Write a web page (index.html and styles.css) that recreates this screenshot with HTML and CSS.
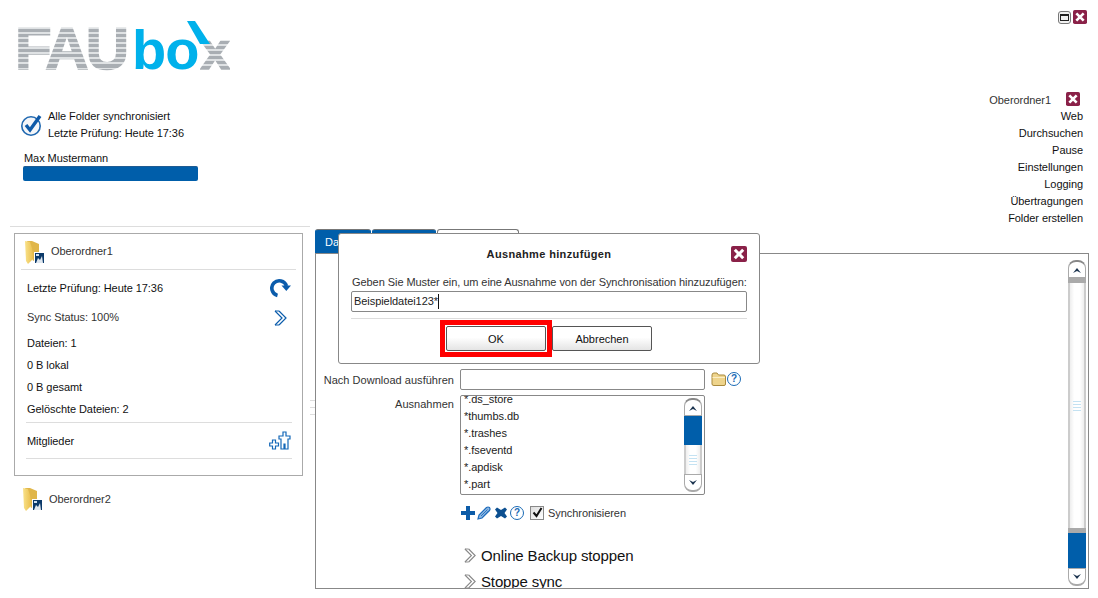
FILE: index.html
```html
<!DOCTYPE html>
<html lang="de">
<head>
<meta charset="utf-8">
<title>FAUbox</title>
<link rel="stylesheet" href="styles.css">
</head>
<body>
<svg class="defs" width="0" height="0" aria-hidden="true">
  <defs>
    <linearGradient id="flap" x1="0" y1="0" x2="1" y2="0">
      <stop offset="0" stop-color="#f9e28a"/><stop offset="1" stop-color="#eabf4e"/>
    </linearGradient>
  </defs>
  <symbol id="folder" viewBox="0 0 24 24">
    <path d="M6 1 L11 1 L18 4 V18 L12 21 Z" fill="#e0b64a"/>
    <path d="M4 1 L9 2 Q12 9 12 16 L12 19 L7 24 L5 21 Z" fill="url(#flap)"/>
    <rect x="13" y="12" width="10" height="11" fill="#fff"/>
    <rect x="14" y="13" width="9" height="10" fill="#0c3a6a"/>
    <path d="M15 23 L17 18 L19 20 L21 16 L22 23 Z" fill="#dfe7ef"/>
    <rect x="15" y="14" width="3" height="2" fill="#cfe0f0"/>
  </symbol>
  <symbol id="cross" viewBox="0 0 16 16">
    <rect x="0" y="0" width="16" height="16" rx="2" fill="#8a2148"/>
    <path d="M3.8 3.8 L12.2 12.2 M12.2 3.8 L3.8 12.2" stroke="#fff" stroke-width="3" fill="none"/>
  </symbol>
  <symbol id="chev" viewBox="0 0 14 16">
    <path d="M1 1 H5 M1 15 H5" fill="none" stroke="currentColor" stroke-width="1"/>
    <path d="M5 1 L12 8 L5 15 M1 1 L8 8 L1 15" fill="none" stroke="currentColor" stroke-width="1.2"/>
  </symbol>
</svg>

<div class="app">
  <header class="top">
    <div class="top-left">
      <div class="logo">
        <span class="logo-fau">FAU</span><span class="logo-bo">bo</span><span class="logo-x">x</span>
        <svg class="logo-accent" width="24" height="23" viewBox="0 0 24 23"><path d="M0 0 H8 L23 23 H13 Z" fill="#00b1eb"/></svg>
      </div>
      <div class="status">
        <svg class="status-icon" width="22" height="24" viewBox="0 0 22 24">
          <circle cx="11" cy="13" r="9.2" fill="#f4f6f9" stroke="#2068b0" stroke-width="1.6"/>
          <path d="M6 12 L10 17 L20 3" fill="none" stroke="#0f5aa8" stroke-width="3.4"/>
        </svg>
        <div class="status-text">
          <div>Alle Folder synchronisiert</div>
          <div>Letzte Prüfung: Heute 17:36</div>
        </div>
      </div>
      <div class="user">Max Mustermann</div>
      <div class="quota"></div>
    </div>
    <div class="top-right">
      <div class="win-btns">
        <span class="win-max"><span class="win-max-in"></span></span>
        <svg class="ico14" viewBox="0 0 16 16"><use href="#cross"/></svg>
      </div>
      <nav class="menu">
        <div class="menu-folder"><span class="menu-folder-name">Oberordner1</span><svg class="ico15" viewBox="0 0 16 16"><use href="#cross"/></svg></div>
        <div>Web</div>
        <div>Durchsuchen</div>
        <div>Pause</div>
        <div>Einstellungen</div>
        <div>Logging</div>
        <div>Übertragungen</div>
        <div>Folder erstellen</div>
      </nav>
    </div>
  </header>

  <main class="main">
    <aside class="side">
      <section class="card">
        <div class="folder-row">
          <svg class="folder-ico" viewBox="0 0 24 24"><use href="#folder"/></svg>
          <span>Oberordner1</span>
        </div>
        <div class="info">
          <div class="info-row r-check"><span>Letzte Prüfung: Heute 17:36</span>
            <svg class="ico-refresh" width="22" height="20" viewBox="0 0 22 20">
              <path d="M7.5 17.5 A7.5 7.5 0 1 1 16.5 8" fill="none" stroke="#0b5cab" stroke-width="3.6"/>
              <path d="M11.5 7.5 H21 L16.3 13 Z" fill="#0b5cab"/>
            </svg>
          </div>
          <div class="info-row r-sync"><span>Sync Status: 100%</span>
            <svg class="ico-chev" viewBox="0 0 14 16"><use href="#chev"/></svg>
          </div>
          <div class="info-row r-plain">Dateien: 1</div>
          <div class="info-row r-plain">0 B lokal</div>
          <div class="info-row r-plain">0 B gesamt</div>
          <div class="info-row r-plain">Gelöschte Dateien: 2</div>
          <div class="info-row r-members"><span class="members-name">Mitglieder</span>
            <svg class="ico-member" width="22" height="20" viewBox="0 0 22 20">
              <path d="M14 1 H17 V5 H21 V8 H19 V18 H16 V13 H15 V18 H12 V8 H10 V5 H14 Z" fill="#fff" stroke="#1468b8" stroke-width="1.2"/>
              <path d="M3.5 9 H6.5 V12 H9.5 V15 H6.5 V18 H3.5 V15 H.7 V12 H3.5 Z" fill="#fff" stroke="#1468b8" stroke-width="1.2"/>
            </svg>
          </div>
        </div>
      </section>
      <div class="folder-row2">
        <svg class="folder-ico" viewBox="0 0 24 24"><use href="#folder"/></svg>
        <span>Oberordner2</span>
      </div>
    </aside>

    <div class="grip"><i></i><i></i><i></i></div>

    <section class="pane">
      <div class="tabs">
        <div class="tab tab-on t1">Daten</div>
        <div class="tab tab-on t2"></div>
        <div class="tab t3"></div>
      </div>
      <div class="panel">
        <div class="form">
          <div class="form-row">
            <label class="lbl">Nach Download ausführen</label>
            <div class="field"></div>
            <svg class="ico-folder2" width="15" height="14" viewBox="0 0 15 14">
              <path d="M1 3 Q1 1 3 1 H6 L7.5 3 H13 Q14.5 3 14.5 5 V12 Q14.5 13.5 13 13.5 H3 Q1 13.5 1 12 Z" fill="#eed48c" stroke="#a98a3e" stroke-width="1"/>
              <path d="M1.5 5.5 H14" stroke="#fbeec6" stroke-width="1"/>
            </svg>
            <span class="help">?</span>
          </div>
          <div class="form-row list-row">
            <label class="lbl">Ausnahmen</label>
            <div class="list">
              <div class="list-items">
                <div>*.ds_store</div>
                <div>*thumbs.db</div>
                <div>*.trashes</div>
                <div>*.fseventd</div>
                <div>*.apdisk</div>
                <div>*.part</div>
              </div>
              <div class="sb sb-list">
                <div class="sb-btn sb-up"><svg width="10" height="6" viewBox="0 0 10 6"><path d="M1 6 L5 1 L9 6 L5 4 Z" fill="#1c3550"/></svg></div>
                <div class="sb-blue sb-list-thumb"></div>
                <div class="sb-track"><div class="sb-lines"><i></i><i></i><i></i><i></i></div></div>
                <div class="sb-btn sb-down"><svg width="10" height="6" viewBox="0 0 10 6"><path d="M1 0 L5 2 L9 0 L5 5 Z" fill="#1c3550"/></svg></div>
              </div>
            </div>
          </div>
          <div class="tools">
            <svg width="14" height="14" viewBox="0 0 14 14"><path d="M5 0 H9 V5 H14 V9 H9 V14 H5 V9 H0 V5 H5 Z" fill="#0d5ca8"/></svg>
            <svg class="t-pencil" width="14" height="14" viewBox="0 0 14 14">
              <path d="M1 13 L2 9 L9.5 1.5 Q11 .5 12.5 1.5 Q13.5 3 12.5 4.5 L5 12 Z" fill="#8fb8e2" stroke="#1f6cbc" stroke-width="1.2"/>
              <path d="M4 10 L10.5 3.5 M6 11 L11.5 5" stroke="#1f6cbc" stroke-width=".9"/>
            </svg>
            <svg class="t-x" width="12" height="12" viewBox="0 0 12 12"><path d="M2 0.5 L6 3 L10 0.5 L12 2.5 L9.5 6 L12 9.5 L10 11.5 L6 9 L2 11.5 L0 9.5 L2.5 6 L0 2.5 Z" fill="#0c4f90"/></svg>
            <span class="help t-help">?</span>
            <span class="check"><svg width="11" height="11" viewBox="0 0 11 11"><path d="M1.5 5.5 L4.5 9 L9.5 1" fill="none" stroke="#111" stroke-width="2"/></svg></span>
            <span class="check-lbl">Synchronisieren</span>
          </div>
          <div class="action a1"><svg class="act-chev" viewBox="0 0 14 16"><use href="#chev"/></svg><span>Online Backup stoppen</span></div>
          <div class="action a2"><svg class="act-chev" viewBox="0 0 14 16"><use href="#chev"/></svg><span>Stoppe sync</span></div>
        </div>
        <div class="sb sb-main">
          <div class="sb-btn sb-up"><svg width="10" height="6" viewBox="0 0 10 6"><path d="M1 6 L5 1 L9 6 L5 4 Z" fill="#1c3550"/></svg></div>
          <div class="sb-cap"></div>
          <div class="sb-track"><div class="sb-lines"><i></i><i></i><i></i><i></i></div></div>
          <div class="sb-cap"></div>
          <div class="sb-blue sb-main-thumb"></div>
          <div class="sb-btn sb-down"><svg width="10" height="6" viewBox="0 0 10 6"><path d="M1 0 L5 2 L9 0 L5 5 Z" fill="#1c3550"/></svg></div>
        </div>
      </div>
    </section>
  </main>

  <div class="dialog">
    <div class="dlg-head">
      <span class="dlg-title">Ausnahme hinzufügen</span>
      <svg class="dlg-close" viewBox="0 0 16 16"><use href="#cross"/></svg>
    </div>
    <div class="dlg-prompt">Geben Sie Muster ein, um eine Ausnahme von der Synchronisation hinzuzufügen:</div>
    <div class="dlg-input"><span>Beispieldatei123*</span><span class="caret"></span></div>
    <div class="dlg-sep"></div>
    <div class="dlg-btns">
      <button class="btn btn-ok">OK</button>
      <button class="btn">Abbrechen</button>
    </div>
  </div>
</div>
</body>
</html>
```
FILE: styles.css
```css
* { box-sizing: border-box; }
html, body { margin: 0; padding: 0; background: #fff; }
body {
  width: 1098px; height: 598px; overflow: hidden;
  font: 11px/17px "Liberation Sans", Arial, sans-serif;
  letter-spacing: -0.06px;
  color: #111;
}
.defs { position: absolute; }
.app { position: relative; width: 1098px; height: 598px; overflow: hidden; }

/* header */
.top { display: flex; justify-content: space-between; height: 226px; }
.top-left { padding: 21px 0 0 18px; width: 320px; }
.logo { position: relative; display: flex; align-items: baseline; height: 50px; width: 215px; padding-top: 3px; font-weight: 700; letter-spacing: 0; }
.logo-fau, .logo-bo, .logo-x { height: 50px; line-height: 50px; }
.logo-fau, .logo-x {
  background: repeating-linear-gradient(#a9aeb3 0 3.5px, #dfe2e4 3.5px 5px);
  -webkit-background-clip: text; background-clip: text; color: transparent;
  -webkit-text-stroke: 1.6px transparent;
}
.logo-fau { font-size: 60px; letter-spacing: -3px; width: 117px; margin-left: -3px; flex: none; }
.logo-bo { font-size: 56px; color: #00b1eb; letter-spacing: -1px; }
.logo-x { font-size: 53px; margin-left: 2px; }
.logo-accent { position: absolute; left: 169px; top: 0; }

.status { display: flex; align-items: center; margin: 37px 0 0 2px; gap: 6px; }
.status-icon { flex: none; margin-top: -1px; }
.user { margin: 8px 0 0 6px; }
.quota { width: 175px; height: 15px; margin: -1px 0 0 5px; background: #005eaa; border-radius: 2px; border-top: 1px solid #1f5b92; }

.top-right { width: 130px; padding: 10px 11px 0 0; display: flex; flex-direction: column; align-items: flex-end; }
.win-btns { display: flex; align-items: center; gap: 2px; height: 14px; }
.win-max { width: 13px; height: 13px; border: 1px solid #777; border-radius: 3px; background: #f2f2f2; display: flex; align-items: center; justify-content: center; }
.win-max-in { width: 9px; height: 7px; border: 1px solid #222; border-top-width: 2px; }
.ico14 { width: 14px; height: 14px; display: block; }
.menu { margin: 67px 4px 0 0; text-align: right; white-space: nowrap; }
.menu-folder { display: flex; justify-content: flex-end; align-items: flex-start; position: relative; height: 17px; padding-right: 32px; color: #333; }
.menu-folder-name { line-height: 19px; }
.ico15 { position: absolute; right: 3px; top: 1px; width: 14px; height: 14px; }

/* main */
.main { display: flex; height: 372px; }
.side { width: 300px; margin-left: 10px; border-top: 1px solid #ddd; padding: 6px 0 0 4px; flex: none; }
.card { width: 289px; height: 243px; border: 1px solid #aaa; padding: 0 6px; }
.folder-row { display: flex; align-items: center; height: 36px; border-bottom: 1px solid #ddd; gap: 6px; color: #333; }
.folder-ico { width: 24px; height: 24px; flex: none; }
.info { padding: 0 4px 0 5px; }
.info-row { display: flex; justify-content: space-between; align-items: center; height: 22px; padding-left: 1px; }
.r-check { height: 36px; }
.r-sync { height: 23px; color: #333; }
.r-plain:nth-child(3) { margin-top: 3px; }
.ico-refresh { margin-top: -1px; }
.ico-chev { width: 14px; height: 16px; color: #0b5cab; margin-right: 4px; }
.r-members { height: 37px; margin-top: 2px; border-top: 1px solid #ddd; border-bottom: 1px solid #ddd; }
.members-name { padding-top: 1px; }
.ico-member { margin-right: 1px; }
.folder-row2 { display: flex; align-items: center; gap: 6px; margin: 11px 0 0 5px; height: 24px; color: #333; }

.grip { width: 0; position: relative; }
.grip i { position: absolute; left: 0; width: 5px; height: 1px; background: #ddd; }
.grip i:nth-child(1) { top: 174px; }
.grip i:nth-child(2) { top: 181px; }
.grip i:nth-child(3) { top: 188px; }

.pane { flex: none; width: 774px; margin-left: 5px; padding-top: 3px; }
.tabs { display: flex; gap: 1px; height: 24px; }
.tab { height: 24px; border: 1px solid #777; border-bottom: 0; border-radius: 3px 3px 0 0; padding: 4px 0 0 9px; }
.tab-on { background: #005eaa; color: #fff; border-color: #777 #005eaa #005eaa; }
.t1 { width: 56px; overflow: hidden; }
.t2 { width: 64px; }
.t3 { width: 82px; background: #fff; }
.panel { display: flex; justify-content: space-between; height: 336px; border: 1px solid #888; overflow: hidden; }
.form { flex: 1; padding-top: 115px; overflow: hidden; }
.form-row { display: flex; align-items: center; height: 21px; }
.lbl { width: 138px; text-align: right; flex: none; color: #333; margin-right: 6px; padding-top: 1px; letter-spacing: .03px; white-space: nowrap; }
.field { width: 245px; height: 21px; border: 1px solid #888; border-radius: 2px; background: #fff; }
.ico-folder2 { margin-left: 6px; margin-top: -1px; flex: none; }
.help {
  display: inline-flex; align-items: center; justify-content: center;
  width: 14px; height: 14px; margin-left: 1px; border: 1.5px solid #1a6ab5; border-radius: 50%;
  font: 700 10px/1 "Liberation Sans", sans-serif; color: #1a6ab5; margin-top: -1px;
}
.list-row { align-items: flex-start; height: 100px; margin-top: 5px; }
.list { width: 245px; height: 100px; border: 1px solid #888; border-radius: 2px; position: relative; display: flex; overflow: hidden; color: #222; }
.list-items { flex: 1; margin: -5px 0 0 3px; }
.tools { display: flex; align-items: center; margin: 10px 0 0 145px; height: 15px; }
.t-pencil { margin-left: 2px; }
.t-x { margin-left: 4px; }
.t-help { margin-left: 3px; margin-top: 0; }
.check { width: 14px; height: 14px; border: 1px solid #888; margin-left: 6px; background: linear-gradient(135deg, #ddd, #fff); display: flex; align-items: center; justify-content: center; }
.check-lbl { margin: 2px 0 0 4px; color: #333; }
.action { display: flex; align-items: center; gap: 4px; height: 26px; margin-left: 148px; font-size: 15px; letter-spacing: -0.13px; color: #111; white-space: nowrap; }
.a1 { margin-top: 22px; }
.act-chev { width: 13px; height: 15px; color: #888; }

/* scrollbars */
.sb { display: flex; flex-direction: column; width: 18px; background: #fff; }
.sb-main { height: 326px; margin: 6px 2px 0 0; }
.sb-list { height: 94px; margin: 2px 2px 0 0; }
.sb-btn { height: 18px; display: flex; align-items: center; justify-content: center; flex: none; background: #fff; border: 1px solid #aaa; }
.sb-up { border-radius: 8px 8px 0 0; border-top: 2px solid #888; }
.sb-down { border-radius: 0 0 8px 8px; border-bottom: 2px solid #aaa; }
.sb-cap { height: 5px; flex: none; background: #aaa; }
.sb-blue { background: #005eaa; flex: none; }
.sb-main-thumb { height: 35px; }
.sb-list-thumb { height: 29px; }
.sb-track { flex: 1; border-left: 2px solid #ccc; border-right: 2px solid #ccc; display: flex; align-items: center; justify-content: center; background: linear-gradient(90deg, #eee, #fff 30%, #fff 70%, #eee); }
.sb-lines { display: flex; flex-direction: column; gap: 2px; }
.sb-lines i { display: block; width: 8px; height: 1px; background: #c4e2f2; }

/* dialog */
.dialog { position: absolute; left: 338px; top: 233px; width: 422px; height: 131px; background: #fff; border: 1px solid #888; border-radius: 3px; padding: 0 12px; color: #333; }
.dlg-head { position: relative; height: 41px; display: flex; align-items: center; justify-content: center; }
.dlg-title { font-weight: 700; color: #222; margin-top: -1px; letter-spacing: .36px; }
.dlg-close { position: absolute; right: 0; top: 12px; width: 16px; height: 16px; }
.dlg-prompt { height: 16px; line-height: 15px; white-space: nowrap; padding-left: 1px; color: #333; }
.dlg-input { height: 21px; border: 1px solid #888; border-radius: 2px; padding-left: 2px; display: flex; align-items: center; color: #222; }
.caret { width: 1px; height: 15px; background: #111; }
.dlg-sep { height: 1px; background: #ddd; margin-top: 6px; }
.dlg-btns { display: flex; justify-content: flex-start; margin: 7px 0 0 95px; gap: 6px; }
.btn {
  width: 100px; height: 25px; padding: 0; border: 1px solid #555; border-radius: 2px;
  background: linear-gradient(#fff 45%, #e4e4e4); font: 11px "Liberation Sans", Arial, sans-serif; color: #111;
}
.btn-ok { position: relative; }
.btn-ok::after { content: ""; position: absolute; inset: -7px; border: 5px solid #f00; }
```
